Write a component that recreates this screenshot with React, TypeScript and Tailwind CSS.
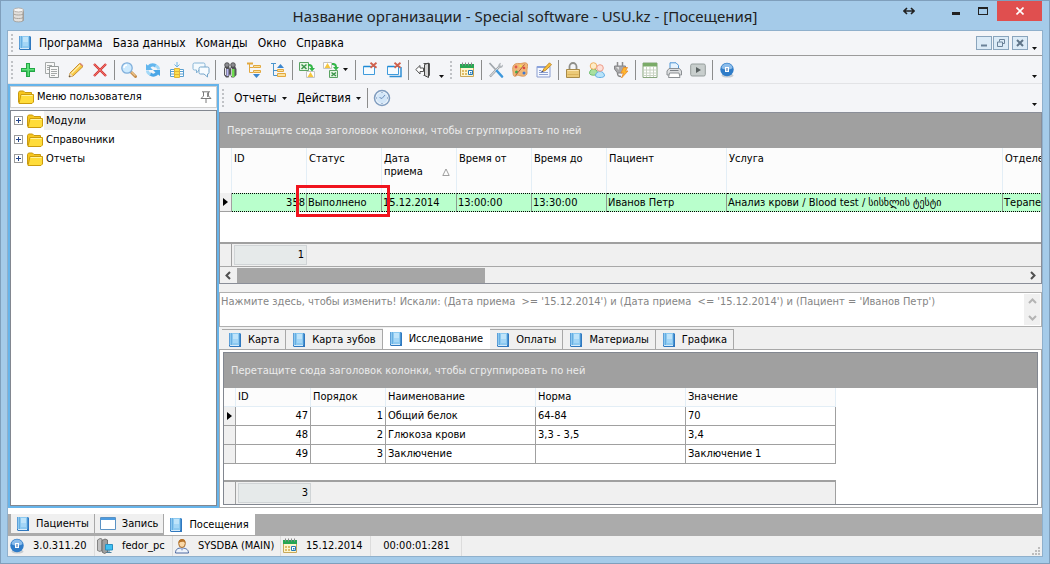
import React, { type ReactNode } from "react";
import clsx from "clsx";

type IconProps = { className?: string };

function Svg({ className = "size-4", children, box = "0 0 16 16" }: IconProps & { children: ReactNode; box?: string }) {
  return (
    <svg className={clsx("shrink-0", className)} viewBox={box} fill="none" aria-hidden="true">
      {children}
    </svg>
  );
}

/* ---------- icons ---------- */

const Book = () => (
  <Svg className="h-4 w-3.5" box="0 0 14 16">
    <path d="M1 1h11l1 1v13H2l-1-1z" fill="#2f78bf" />
    <path d="M1 1h1v12H1z" fill="#5d9fd8" />
    <path d="M2 1h9v12H2z" fill="#8cc9f0" />
    <path d="M3 1h1v12H3z" fill="#68afe2" />
    <path d="M5 2h5v5H5z" fill="#bfe4fa" />
    <path d="M5 7h5v4H5z" fill="#a4d6f6" />
    <path d="M11 1h1v12h-1z" fill="#4a94d2" />
    <path d="M2 13h9v1H2z" fill="#d6ebfa" />
  </Svg>
);

const Folder = () => (
  <Svg className="h-3.5 w-4" box="0 0 16 14">
    <path d="M.5 12.500V2.500l1-1.500h4l1.500 1.500h6.500v2" fill="#f7c61c" stroke="#c99a10" />
    <path d="M1 13.500 3 4.500h12.500v7.500l-1.500 1.500z" fill="#ffdc3a" stroke="#cc9c0c" />
    <path d="M3.500 5.500h11" stroke="#fff3a0" />
  </Svg>
);

const Plus = () => (
  <Svg>
    <path d="M6 1h4v5h5v4h-5v5H6v-5H1V6h5z" fill="#22a845" />
    <path d="M7 2h2v5h5v1.500H9V14H7.500V8.500H2V7h5z" fill="#5fe07a" />
  </Svg>
);

const Copy = () => (
  <Svg>
    <path d="M1.500.500h9v11h-9z" fill="#f7f7f7" stroke="#a5a9a9" />
    <path d="M3 3.500h5M3 5.500h3M3 7.500h3" stroke="#a5a9a9" />
    <path d="M5.500 4.500h9v11h-9z" fill="#f9f9f9" stroke="#959a9a" />
    <path d="M7 7.500h6M7 9.500h6M7 11.500h6M7 13.500h4" stroke="#a5a9a9" />
  </Svg>
);

const Pencil = () => (
  <Svg>
    <path d="m1 15 1-4L11.500 1.500 15 4.500 5 14z" fill="#f7c945" stroke="#bd7c1c" strokeWidth=".8" />
    <path d="M3.500 11.500 12 3" stroke="#ffeeb0" strokeWidth="1.300" />
    <path d="m11.500 1.500 1-.8 2.800 2.800-.8 1z" fill="#d98c80" />
    <path d="m1 15 1-4 3 3z" fill="#efdcc0" />
    <path d="m1 15 .4-1.800L2.800 14.500z" fill="#333" />
  </Svg>
);

const Cross = () => (
  <Svg>
    <path d="m2 2 12 12M14 2 2 14" stroke="#d23a38" strokeWidth="2.400" />
    <path d="m2 2 12 12M14 2 2 14" stroke="#f06a62" strokeWidth="1" />
  </Svg>
);

const Search = () => (
  <Svg>
    <path d="m10.500 10.500 4 4" stroke="#c48d4c" strokeWidth="3" strokeLinecap="round" />
    <path d="m10.500 10 3.800 3.800" stroke="#efc68c" strokeWidth="1.200" />
    <circle cx="6" cy="6" r="5.200" fill="#cdeafe" stroke="#7faedb" strokeWidth="1.300" />
    <path d="M3 6a3 3 0 0 1 3-3" stroke="#fff" strokeWidth="1.500" />
  </Svg>
);

const Refresh = () => (
  <Svg>
    <path d="M1 8V2l2 1.500C5 .8 10 .5 12.500 3.500L10 5.500C8.500 4 7 4 5.500 5.500L8 8z" fill="#62b6ee" />
    <path d="M15 8v6l-2-1.500C11 15.200 6 15.500 3.500 12.500L6 10.500c1.500 1.500 3 1.500 4.500 0L8 8z" fill="#4ba6e6" />
    <path d="M11 2.500c3 1 4 2.500 4 5h-3c0-1-.5-2-2-2.500zM5 13.500C2 12.500 1 11 1 8.500h3c0 1 .5 2 2 2.500z" fill="#a3d8f7" />
  </Svg>
);

const InsertColumn = () => (
  <Svg>
    <path d="M1.500 7.500h4v7h-4zM10.500 7.500h4v7h-4zM1 9.500h5M1 12h5M10 9.500h5M10 12h5" stroke="#5a9fd0" fill="#fff" />
    <path d="M5.500 6.500h5v9h-5z" fill="#ffe04a" stroke="#e0b43a" />
    <path d="M6 9.500h4M6 12.500h4" stroke="#e0b43a" />
    <path d="M8 0v5M5.500 2.500 8 5l2.500-2.500" stroke="#6db4e4" />
  </Svg>
);

const Chats = () => (
  <Svg className="h-4 w-[18px]" box="0 0 18 16">
    <path d="M2.500 1h9q1.500 0 1.500 1.500v4q0 1.500-1.500 1.500H7L4.500 11V8h-2Q1 8 1 6.500v-4Q1 1 2.500 1z" fill="#f4fafe" stroke="#86b4d6" />
    <path d="M8.500 5h7Q17 5 17 6.500v4q0 1.500-1.500 1.500v3L12 12H8.500Q7 12 7 10.500v-4Q7 5 8.500 5z" fill="#f8fcff" stroke="#75a5ca" />
  </Svg>
);

const Binoculars = () => (
  <Svg>
    <path d="M3 4h4l1 3 1-3h4l1.500 3v6L12 15.500H9.500L8 12l-1.500 3.500H4L2 13V7z" fill="#55555a" />
    <circle cx="5" cy="3" r="2.300" fill="#8b8b90" stroke="#444" strokeWidth=".8" />
    <circle cx="11" cy="3" r="2.300" fill="#8b8b90" stroke="#444" strokeWidth=".8" />
    <path d="M4.500 7h2v7h-2z" fill="#b9b6f2" />
    <path d="M10 7h2.500v8H10z" fill="#6fdc50" />
    <path d="M3 6h1v7H3zM9 6h.8v8H9z" fill="#e4e4e4" />
  </Svg>
);

const TreeIcon = ({ up }: { up?: boolean }) => (
  <Svg>
    {up ? (
      <>
        <path d="M3.500 1.500v12H7M1 1.500h5M3.500 8.500H7" stroke="#4a94cc" />
        <path d="m7 6 3.500-4L14 6z" fill="#3b86cf" />
        <path d="M7.500 7.500h6v2h-6z" fill="#fbe3a0" stroke="#e2a840" />
        <path d="M7.500 11.500h8v3h-8z" fill="#fbe3a0" stroke="#e2a840" />
      </>
    ) : (
      <>
        <path d="M3.500 2v8.500H7M3.500 5.500H7" stroke="#e2a840" />
        <path d="M1 1.500h6" stroke="#e2a840" strokeWidth="2" />
        <path d="M7.500 3.500h7v2h-7zM7.500 8.500h7v2h-7z" fill="#fbe3a0" stroke="#e2a840" />
        <path d="M7 12h7l-3.500 4z" fill="#3b86cf" />
      </>
    )}
  </Svg>
);

const ExcelExport = () => (
  <Svg>
    <path d="M.5.500h9v8h-9z" fill="#e6f5e4" stroke="#5aa262" />
    <path d="m2.500 2.500 5 4.500M7.500 2.500 2.500 7" stroke="#3b944a" strokeWidth="1.500" />
    <path d="M9 2c4-.5 5 2 5 4h2l-3 3.500L10 6h2c0-1.500-1-2.200-3-2z" fill="#35b64a" />
    <path d="M7.500 9.500h8v6h-8z" fill="#fff" stroke="#c4c4c4" />
    <path d="m8.500 15 3-5 3 5z" fill="#f5c640" />
  </Svg>
);

const ExcelImport = () => (
  <Svg>
    <path d="M.5.500h8v6h-8z" fill="#fff" stroke="#c4c4c4" />
    <path d="m1.500 6 3-5 3 5z" fill="#f5c640" />
    <path d="M9 1c4-.5 5 2 5 4h2l-3 3.500L10 5h2c0-1.500-1-2.200-3-2z" fill="#35b64a" />
    <path d="M6.500 8.500h8v7h-8z" fill="#e6f5e4" stroke="#5aa262" />
    <path d="m8.500 10.500 4.500 3.500M13 10.500l-4.500 3.500" stroke="#3b944a" strokeWidth="1.500" />
  </Svg>
);

const CloseWindow = ({ many }: { many?: boolean }) => (
  <Svg>
    {many && <path d="M3.500 14.500h11.500V5" stroke="#2f8fd4" strokeWidth="1.500" />}
    <path d="M1.500 4.500h11v8h-11z" fill="#f6fbff" stroke="#3f9bdc" />
    <path d="M1.500 4.500h7" stroke="#1f8ad4" strokeWidth="1.500" />
    <path d="m8.500.800 6 5M14.500.800l-6 5" stroke="#d0604c" strokeWidth="1.800" />
  </Svg>
);

const Exit = () => (
  <Svg>
    <path d="M8.500 1.500h6v12h-6" fill="#fff" stroke="#555" />
    <path d="m9.500 2.500 4-1.500v14.500l-4-2z" fill="#d8d8d8" stroke="#444" />
    <path d="M.8 7.500 5 3.500V6h3.500v3.500H5V12z" fill="#fff" stroke="#555" />
  </Svg>
);

const Calendar = () => (
  <Svg>
    <path d="M1.500 4.500h13v10h-13z" fill="#fdf5cf" stroke="#c8a85a" />
    <path d="M1 2h14v4H1z" fill="#27a552" />
    <path d="M3.500.500v3M6.500.500v3M9.500.500v3M12.500.500v3" stroke="#888" />
    <path d="M3 8h2v2H3zM6 8h2v2H6zM3 11h2v2H3zM6 11h2v2H6z" fill="#dfbd68" />
    <path d="M9.500 8.500h4v4h-4z" fill="#fff" stroke="#2378b8" />
    <path d="M11 10h1.500v1.500H11z" fill="#2378b8" />
  </Svg>
);

const Tools = () => (
  <Svg>
    <path d="M12 4 2 14.500" stroke="#9a9fa5" strokeWidth="2.400" />
    <path d="M12 4 2.500 14" stroke="#eceff1" />
    <path d="M15 2.500c.3 3-2 4.300-4.500 3.200C9.800 3 11 1 13 .8l-.8 2.400 1 .8z" fill="#b2b7bc" />
    <path d="m1.500 1 6 6.500" stroke="#a0a6ac" strokeWidth="1.800" />
    <path d="m9 9 5 5.500" stroke="#3d98dc" strokeWidth="2.600" strokeLinecap="round" />
  </Svg>
);

const Palette = () => (
  <Svg>
    <path d="M1 10C-.5 3 3 1 7 1.500c4 .3 6-2 8.500.5.500 4-1 5-.5 8s-2 5-6 4-3-1-5 0-3 0-3-4z" fill="#f0b778" stroke="#d68f52" strokeWidth=".8" />
    <circle cx="4" cy="5" r="1.400" fill="#e0584c" />
    <circle cx="8.500" cy="4" r="1.300" fill="#f7e04c" />
    <circle cx="4.500" cy="10" r="1.500" fill="#43a94c" />
    <circle cx="12" cy="11" r="1.500" fill="#3f78d0" />
    <circle cx="12" cy="6" r="1.300" fill="#e0483c" />
    <path d="m3.500 13.500 9-11" stroke="#b5563f" />
  </Svg>
);

const Note = () => (
  <Svg>
    <path d="M1 4.500h13v10.500H1z" fill="#f5f8ff" stroke="#8a9dd0" />
    <path d="M1 4h12v2H1z" fill="#8aa2dc" />
    <path d="M3 8.500h2M3 10.500h9M3 12.500h9" stroke="#8fa2d0" />
    <path d="M6.500 9.500 8 6.500 13.500.800 15.500 2.800 9.500 8.500z" fill="#f6bf3c" stroke="#b67a1c" strokeWidth=".8" />
    <path d="m5 10.500 1-2 1.500 1z" fill="#2a3a7a" />
  </Svg>
);

const Lock = () => (
  <Svg>
    <path d="M4.500 7V4.500a3.500 3.500 0 0 1 7 0V7" stroke="#8f8f8a" strokeWidth="1.800" />
    <path d="M1.500 7.500h13v8h-13z" fill="#ecca78" stroke="#a88a48" />
    <path d="M2.500 8.500h11" stroke="#fbe6b4" />
    <path d="M2.500 12.500h11" stroke="#dbb35c" />
  </Svg>
);

const Users = () => (
  <Svg>
    <path d="M.5 11.500c0-6 8-6 8 0-1 2.300-7 2.300-8 0z" fill="#a9e0a0" stroke="#6cbc6c" />
    <circle cx="4.500" cy="4" r="3.300" fill="#fdecc8" stroke="#f0b060" />
    <path d="M6.500 14c0-6 9-6 9 0-1 2-8 2-9 0z" fill="#b9e4fa" stroke="#64aee4" />
    <circle cx="11" cy="6" r="3.300" fill="#fde0d8" stroke="#ee9c8a" />
  </Svg>
);

const Plug = () => (
  <Svg>
    <path d="M4.500 0v4M9.500 0v4" stroke="#8d8d8d" strokeWidth="1.500" />
    <path d="M1.500 4h11v3l-3 4h-5l-3-4z" fill="#a8a8aa" stroke="#858588" />
    <path d="M3 5h3v3z" fill="#e0e0e0" />
    <path d="M4.500 11c0 3 1 3.500 3.500 3.500" stroke="#888" strokeWidth="1.500" />
    <path d="M10.500 5.500h4L12.500 9H15l-6.500 7 2-5H8z" fill="#ffb72d" stroke="#e88a2c" strokeWidth=".8" />
  </Svg>
);

const Sheet = () => (
  <Svg>
    <path d="M1 1h14v14.500H1z" fill="#fff" stroke="#86a57c" />
    <path d="M1 1h14v3.500H1z" fill="#7aab68" />
    <path d="M4.500 5v10M8 5v10M11.500 5v10M1.500 8h13M1.500 11h13M1.500 13.500h13" stroke="#c9d3c4" />
  </Svg>
);

const Printer = () => (
  <Svg>
    <path d="M4 8V.800h6l2.500 2.500V8" fill="#e6f3fe" stroke="#4f95d4" />
    <path d="M1 13V9l2-2.500h10.500L15.500 9v4z" fill="#dcdee0" stroke="#8c9094" />
    <path d="M3.500 11h9.500l1 4.500H2.500z" fill="#fff" stroke="#8c9094" />
    <path d="M4 8.500h8.500" stroke="#7c8186" />
  </Svg>
);

const Play = () => (
  <Svg>
    <rect x=".7" y="2" width="14.600" height="12" rx="1.500" fill="#c8cecd" stroke="#959d9c" />
    <path d="M6 5v6l5-3z" fill="#586060" />
  </Svg>
);

const Info = () => (
  <Svg>
    <ellipse cx="8.500" cy="13.500" rx="6" ry="2" fill="#c6ccd2" />
    <circle cx="8" cy="7.500" r="6.700" fill="#2f7cc8" />
    <path d="M2.500 6C3 0 13 0 13.500 6 11 8 5 8 2.500 6z" fill="#8cbdeb" />
    <path d="M6 5h4v5H6z" fill="#fff" />
    <path d="M7.500 6h1v3h-1z" fill="#2b64a8" />
  </Svg>
);

const Clock = () => (
  <Svg className="size-[18px]" box="0 0 18 18">
    <circle cx="9" cy="9" r="7.500" fill="#eef5fc" stroke="#7f9cbf" strokeWidth="1.500" />
    <circle cx="9" cy="9" r="5.800" fill="#d3e6f8" />
    <path d="M9 9.500 12 6M9 9.500 6.500 8.500" stroke="#6c8fbc" />
    <path d="M9 3v1M9 14v1M3 9h1M14 9h1" stroke="#6f8cb4" />
  </Svg>
);

const Pin = () => (
  <Svg className="h-3 w-3" box="0 0 12 12">
    <path d="M2 .800h8M3.500 1v4L1 7.500h10L8.500 5V1M6 7.500V12" fill="#fff" stroke="#7b7b7b" />
    <path d="M7 1.500h1.500v4.500H7z" fill="#8b8b8b" />
  </Svg>
);

const Database = () => (
  <Svg className="h-4 w-3.5" box="0 0 14 16">
    <path d="M1.500 3v10c0 2.500 10 2.500 10 0V3z" fill="#e3e0dc" stroke="#9c9893" strokeWidth=".8" />
    <ellipse cx="6.500" cy="3" rx="5" ry="2" fill="#f8f6f4" stroke="#a8a39e" strokeWidth=".8" />
    <path d="M1.500 6.500c0 2 10 2 10 0M1.500 10c0 2 10 2 10 0" stroke="#a9a49e" />
    <path d="M11 5v9" stroke="#9c9893" />
  </Svg>
);

const FormWindow = () => (
  <Svg className="h-3.5 w-4" box="0 0 16 14">
    <path d="M.5.500h15v12H.5z" fill="#fff" stroke="#5a92c4" />
    <path d="M1 1h14v2H1z" fill="#4c9be0" />
  </Svg>
);

const Computer = () => (
  <Svg className="h-4 w-[18px]" box="0 0 18 16">
    <path d="M1.500 2 4 .5 6 1v11l-2 1.500-2.500-1z" fill="#c3c3c3" stroke="#6d6d6d" strokeWidth=".8" />
    <path d="m6 2.500 3-1.500 2.500 1v12L8.500 15.500 6 14z" fill="#9e9e9e" stroke="#5d5d5d" strokeWidth=".8" />
    <path d="M9.500 6.500h7v5.500h-7z" fill="#40c0f2" stroke="#2b8fc0" />
    <path d="M13 12v2M10.500 14.500h5" stroke="#4b7f9c" />
  </Svg>
);

const User = () => (
  <Svg>
    <path d="M1.500 15c0-4 2.500-5 6-5s7 1 7 5z" fill="#eef3fb" stroke="#4c69a0" />
    <path d="m6 10 2 3 2-3z" fill="#9fb4dc" />
    <ellipse cx="8" cy="5.500" rx="3.300" ry="4" fill="#fbd9a8" stroke="#a86c2c" />
    <path d="M4.500 5C4 0 12-.5 11.500 5 10 3 7 3.500 4.500 5z" fill="#b8742a" />
  </Svg>
);

const Caret = () => (
  <Svg className="h-[3px] w-[5px]" box="0 0 5 3">
    <path d="M0 0h5L2.500 3z" fill="#111" />
  </Svg>
);

const Marker = () => (
  <Svg className="mx-auto h-2 w-[5px]" box="0 0 5 8">
    <path d="M0 0v8l5-4z" fill="#000" />
  </Svg>
);

const Chevron = ({ dir, tone }: { dir: "left" | "right" | "up" | "down"; tone: string }) => {
  const d = { left: "M6 1 2.500 4.500 6 8", right: "M3 1l3.500 3.500L3 8", up: "M1 6l3.500-3.500L8 6", down: "M1 3l3.500 3.500L8 3" }[dir];
  return (
    <Svg className="size-[9px]" box="0 0 9 9">
      <path d={d} stroke={tone} strokeWidth="2" />
    </Svg>
  );
};

/* ---------- small building blocks ---------- */

const Grip = () => <span className="mx-[3px] h-[18px] w-0.5 shrink-0 bg-[repeating-linear-gradient(to_bottom,#c0c2c6_0_2px,transparent_2px_4px)]" />;

const Separator = () => <span className="mx-0.5 h-5 w-px shrink-0 bg-[#8c8c8c]" />;

function Tool({ label, children }: { label: string; children: ReactNode }) {
  return (
    <button type="button" aria-label={label} className="flex h-6 w-6 shrink-0 items-center justify-center">
      {children}
    </button>
  );
}

const Overflow = ({ className }: IconProps) => (
  <button type="button" aria-label="Ещё" className={clsx("flex h-4 w-3 shrink-0 items-end justify-center pb-1", className)}>
    <Caret />
  </button>
);

const toolGroups: [string, ReactNode][][] = [
  [["Добавить", <Plus />], ["Копировать", <Copy />], ["Изменить", <Pencil />], ["Удалить", <Cross />]],
  [["Поиск", <Search />], ["Обновить", <Refresh />], ["Столбцы", <InsertColumn />], ["Сообщения", <Chats />]],
  [["Найти", <Binoculars />], ["Развернуть", <TreeIcon />], ["Свернуть", <TreeIcon up />]],
];

const serviceGroups: [string, ReactNode][][] = [
  [["Календарь", <Calendar />]],
  [["Настройки", <Tools />], ["Оформление", <Palette />], ["Заметка", <Note />]],
  [["Блокировка", <Lock />], ["Пользователи", <Users />], ["Подключение", <Plug />]],
  [["Таблица", <Sheet />], ["Печать", <Printer />], ["Запуск", <Play />]],
  [["О программе", <Info />]],
];

function Groups({ groups, trailing }: { groups: [string, ReactNode][][]; trailing?: boolean }) {
  return groups.map((group, i) => (
    <React.Fragment key={i}>
      {group.map(([label, icon]) => (
        <Tool key={label} label={label}>
          {icon}
        </Tool>
      ))}
      {(trailing || i < groups.length - 1) && <Separator />}
    </React.Fragment>
  ));
}

function GroupPanel() {
  return (
    <div className="flex h-[35px] shrink-0 items-center bg-[#a0a0a0] px-[7px] text-[#ececec]">
      Перетащите сюда заголовок колонки, чтобы сгруппировать по ней
    </div>
  );
}

function Footer({ count, className }: { count: number; className?: string }) {
  return (
    <div className={clsx("flex h-6 shrink-0 border-t-2 border-[#a0a0a0] bg-[#f0f0f0]", className)}>
      <span className="w-3 border-r border-[#a0a0a0]" />
      <span className="my-px ml-0.5 flex w-[73px] items-center justify-end border border-[#d0d4d6] bg-[#e6eaea] pr-0.5">{count}</span>
    </div>
  );
}

/* ---------- window parts ---------- */

function TitleBar() {
  return (
    <header className="relative flex h-[30px] shrink-0 items-center justify-center">
      <span className="absolute left-1 top-1.5">
        <Database />
      </span>
      <h1 className="[font-family:'Noto_Sans',sans-serif] text-[15px] text-[#222]">
        Название организации - Special software - USU.kz - [Посещения]
      </h1>
      <div className="absolute right-0 top-0 flex h-5 items-stretch">
        <button type="button" aria-label="Перенести" className="mr-6 flex w-5 items-center justify-center">
          <Svg className="h-2 w-3" box="0 0 12 8">
            <path d="M2 4h8M4 1 1 4l3 3M8 1l3 3-3 3" stroke="#222" strokeWidth="1.600" />
          </Svg>
        </button>
        <button type="button" aria-label="Свернуть окно" className="flex w-[26px] items-center justify-center pt-1">
          <span className="h-[3px] w-2 bg-[#222]" />
        </button>
        <button type="button" aria-label="Развернуть окно" className="flex w-7 items-center justify-center">
          <span className="h-2 w-2.5 border border-t-2 border-[#222]" />
        </button>
        <button type="button" aria-label="Закрыть окно" className="flex w-[45px] items-center justify-center bg-[#e04f4f]">
          <Svg className="size-2" box="0 0 8 8">
            <path d="m.5.500 7 7M7.500.500l-7 7" stroke="#fff" strokeWidth="1.600" />
          </Svg>
        </button>
      </div>
    </header>
  );
}

function MenuBar() {
  const box = "flex h-3.5 w-4 items-center justify-center border border-[#8aa5bd] bg-[#dcebf7]";
  return (
    <nav className="flex h-[25px] shrink-0 items-center border-b border-[#9b9b9b] text-xs">
      <Grip />
      <span className="mx-0.5">
        <Book />
      </span>
      {["Программа", "База данных", "Команды", "Окно", "Справка"].map((m) => (
        <button type="button" key={m} className="px-[5px]">
          {m}
        </button>
      ))}
      <div className="ml-auto flex items-center">
        <button type="button" aria-label="Свернуть" className={clsx(box, "mr-px")}>
          <Svg className="size-2" box="0 0 8 8"><path d="M1 6.500h6" stroke="#6b8299" strokeWidth="2" /></Svg>
        </button>
        <button type="button" aria-label="Восстановить" className={box}>
          <Svg className="size-2" box="0 0 8 8"><path d="M2.500 2.500v-2h5v4h-2M.5 3h5v4.500h-5z" stroke="#6b8299" /></Svg>
        </button>
        <button type="button" aria-label="Закрыть" className={clsx(box, "ml-[3px]")}>
          <Svg className="size-2" box="0 0 8 8"><path d="m1 1 6 6M7 1 1 7" stroke="#5f7488" strokeWidth="2" /></Svg>
        </button>
        <Overflow className="mr-0.5 mt-1.5" />
      </div>
    </nav>
  );
}

function ToolBar() {
  return (
    <div className="flex h-7 shrink-0 items-center border-b border-[#e2e3e6]" role="toolbar">
      <Grip />
      <Groups groups={toolGroups} trailing />
      <Tool label="Экспорт"><ExcelExport /></Tool>
      <Tool label="Импорт"><ExcelImport /></Tool>
      <button type="button" aria-label="Параметры импорта" className="flex h-6 w-2.5 items-center">
        <Caret />
      </button>
      <Separator />
      <Tool label="Закрыть вкладку"><CloseWindow /></Tool>
      <Tool label="Закрыть все"><CloseWindow many /></Tool>
      <Separator />
      <Tool label="Выход"><Exit /></Tool>
      <Overflow className="mt-2" />
      <Grip />
      <Groups groups={serviceGroups} />
      <Overflow className="ml-auto mr-0.5 mt-2" />
    </div>
  );
}

function Sidebar() {
  return (
    <aside className="flex w-[211px] shrink-0 flex-col gap-0.5 border-2 border-[#67b4ea] bg-[#f4f5f8]">
      <div className="flex h-[22px] items-center border border-[#d0d0d0] bg-white pl-[7px] pr-1">
        <Folder />
        <h2 className="ml-[3px] flex-1">Меню пользователя</h2>
        <button type="button" aria-label="Закрепить">
          <Pin />
        </button>
      </div>
      <ul className="flex-1 border border-[#828790] bg-white">
        {["Модули", "Справочники", "Отчеты"].map((name, i) => (
          <li key={name} className="flex h-[19px] items-center pl-[3px]">
            <button type="button" aria-label={`Развернуть: ${name}`} className="mr-1 flex size-[9px] items-center justify-center border border-[#9a9a9a] bg-white">
              <Svg className="size-[7px]" box="0 0 7 7">
                <path d="M1 3.500h5M3.500 1v5" stroke="#24468c" />
              </Svg>
            </button>
            <Folder />
            <button type="button" className={clsx("ml-px h-full flex-1 pl-0.5 text-left", i === 0 && "bg-[#f0f0f0]")}>
              {name}
            </button>
          </li>
        ))}
      </ul>
    </aside>
  );
}

function VisitsGrid() {
  const head = "h-[45px] border-r border-[#e3eef6] px-0.5 pt-1 text-left align-top font-normal leading-[13px]";
  const cell = "h-[19px] border-r border-y border-y-black border-r-[#8c9c90] border-dotted [border-right-style:solid] bg-[#b9ffcc] px-px";
  return (
    <section className="flex shrink-0 flex-col overflow-hidden border border-[#8a8e98] bg-white">
      <GroupPanel />
      <div className="overflow-hidden pb-[30px]">
        <table className="w-[858px] table-fixed border-separate border-spacing-0 whitespace-nowrap">
          <colgroup>
            <col className="w-3" />
            <col className="w-[75px]" />
            <col className="w-[75px]" />
            <col className="w-[75px]" />
            <col className="w-[75px]" />
            <col className="w-[75px]" />
            <col className="w-[120px]" />
            <col className="w-[276px]" />
            <col className="w-[75px]" />
          </colgroup>
          <thead className="bg-[#fcfcfc]">
            <tr>
              <th className={head} aria-label="Строка" />
              <th className={head}>ID</th>
              <th className={head}>Статус</th>
              <th className={head}>
                <div className="flex items-end justify-between whitespace-normal">
                  <span className="w-12">Дата приема</span>
                  <Svg className="mb-0.5 mr-1 size-2" box="0 0 8 8">
                    <path d="M4 1 .8 7.500h6.400z" stroke="#888" strokeWidth=".8" />
                  </Svg>
                </div>
              </th>
              <th className={head}>Время от</th>
              <th className={head}>Время до</th>
              <th className={head}>Пациент</th>
              <th className={head}>Услуга</th>
              <th className={head}>Отделение</th>
            </tr>
          </thead>
          <tbody>
            <tr>
              <td className="border-b border-r border-[#a0a0a0] bg-[#f0f0f0]"><Marker /></td>
              <td className={clsx(cell, "text-right")}>358</td>
              <td className={clsx(cell, "relative")}>
                Выполнено
                <span className="pointer-events-none absolute -left-[11px] -top-[9px] z-10 h-8 w-[94px] border-[3px] border-[#f0141e]" />
              </td>
              <td className={cell}>15.12.2014</td>
              <td className={cell}>13:00:00</td>
              <td className={cell}>13:30:00</td>
              <td className={cell}>Иванов Петр</td>
              <td className={cell}>Анализ крови / Blood test / სისხლის ტესტი</td>
              <td className={cell}>Терапевтия</td>
            </tr>
          </tbody>
        </table>
      </div>
      <Footer count={1} />
      <div className="flex h-[17px] items-center border-t border-[#a8a8a8] bg-[#f0f0f0]">
        <button type="button" aria-label="Влево" className="flex w-[17px] justify-center">
          <Chevron dir="left" tone="#505050" />
        </button>
        <span className="flex h-[15px] flex-1">
          <span className="w-[31.500%] bg-[#a6a6a6]" />
        </span>
        <button type="button" aria-label="Вправо" className="flex w-[17px] justify-center">
          <Chevron dir="right" tone="#505050" />
        </button>
      </div>
    </section>
  );
}

const results = [
  [47, 1, "Общий белок", "64-84", "70"],
  [48, 2, "Глюкоза крови", "3,3 - 3,5", "3,4"],
  [49, 3, "Заключение", "", "Заключение 1"],
];

function ResultsGrid() {
  const line = "h-[19px] border-b border-r border-[#a0a0a0] px-0.5";
  const head = "h-[19px] border-b border-r border-[#e3eef6] px-0.5 text-left font-normal";
  return (
    <div className="flex min-h-0 flex-1 flex-col border border-[#828790] bg-white">
      <GroupPanel />
      <table className="w-[612px] table-fixed border-separate border-spacing-0">
        <colgroup>
          <col className="w-3" />
          <col className="w-[75px]" />
          <col className="w-[75px]" />
          <col className="w-[150px]" />
          <col className="w-[150px]" />
          <col className="w-[150px]" />
        </colgroup>
        <thead className="bg-[#fcfcfc]">
          <tr>
            <th className={head} aria-label="Строка" />
            {["ID", "Порядок", "Наименование", "Норма", "Значение"].map((h) => (
              <th key={h} className={head}>{h}</th>
            ))}
          </tr>
        </thead>
        <tbody>
          {results.map((row, i) => (
            <tr key={i}>
              <td className="border-b border-r border-[#a0a0a0] bg-[#f0f0f0]">{i === 0 && <Marker />}</td>
              {row.map((v, j) => (
                <td key={j} className={clsx(line, j < 2 && "text-right")}>{v}</td>
              ))}
            </tr>
          ))}
        </tbody>
      </table>
      <div className="flex-1" />
      <Footer count={3} className="w-[612px] border-r border-r-[#a0a0a0]" />
    </div>
  );
}

function Tab({ icon, active, roomy, children }: { icon: ReactNode; active?: boolean; roomy?: boolean; children: ReactNode }) {
  return (
    <button
      type="button"
      role="tab"
      aria-selected={!!active}
      className={clsx(
        "flex items-center gap-1.5 whitespace-nowrap border-r",
        roomy ? "px-1.5" : "px-[5px]",
        active ? "h-[21px] border-white bg-white" : "h-[19px] border-[#a8a8a8] bg-[#f0f0f0]",
      )}
    >
      {icon}
      {children}
    </button>
  );
}

function Workspace() {
  return (
    <main className="flex min-w-0 flex-1 flex-col bg-[#f0f0f0]">
      <div className="flex h-7 shrink-0 items-center bg-[#f4f5f8] text-xs" role="toolbar">
        <Grip />
        <button type="button" className="ml-1 flex items-center gap-[5px] px-[3px]">Отчеты <Caret /></button>
        <button type="button" className="ml-1 flex items-center gap-[5px] px-[3px]">Действия <Caret /></button>
        <span className="ml-px flex"><Separator /></span>
        <Tool label="Время"><Clock /></Tool>
        <Overflow className="ml-auto mr-0.5 mt-2" />
      </div>
      <VisitsGrid />
      <div className="mt-2 flex h-[35px] shrink-0 border border-[#b0b0b0] bg-white">
        <textarea
          readOnly
          aria-label="Условие поиска"
          className="h-full flex-1 resize-none overflow-hidden p-px text-[#858585] outline-none"
          value="Нажмите здесь, чтобы изменить! Искали: (Дата приема  >= '15.12.2014') и (Дата приема  <= '15.12.2014') и (Пациент = 'Иванов Петр')"
        />
        <div className="m-px flex w-4 flex-col items-center justify-around bg-[#f0f0f0]">
          <button type="button" aria-label="Вверх"><Chevron dir="up" tone="#b4b4b4" /></button>
          <button type="button" aria-label="Вниз"><Chevron dir="down" tone="#b4b4b4" /></button>
        </div>
      </div>
      <div className="mt-px flex h-[21px] shrink-0 items-end pl-[3px]" role="tablist">
        {["Карта", "Карта зубов", "Исследование", "Оплаты", "Материалы", "Графика"].map((t) => {
          const active = t === "Исследование";
          return (
            <div key={t} className={clsx(!active && "border-t border-[#a8a8a8]")}>
              <Tab icon={<Book />} active={active} roomy>{t}</Tab>
            </div>
          );
        })}
      </div>
      <div className="flex min-h-0 flex-1 flex-col border border-[#a8a8a8] bg-white px-[3px] py-0.5">
        <ResultsGrid />
      </div>
    </main>
  );
}

function StatusBar() {
  const cells: [ReactNode, string, string][] = [
    [<Info />, "3.0.311.20", "w-[87px]"],
    [<Computer />, "fedor_pc", "w-[78px]"],
    [<User />, "SYSDBA (MAIN)", "w-[108px]"],
    [<Calendar />, "15.12.2014", "w-[90px]"],
    [null, "00:00:01:281", "w-[91px]"],
  ];
  return (
    <footer className="flex h-5 shrink-0 items-center bg-[#f0f0f0]">
      {cells.map(([icon, text, width]) => (
        <span key={text} className={clsx("flex h-full items-center gap-2 whitespace-nowrap border-r border-[#dcdcdc] pl-px", width, !icon && "justify-center")}>
          {icon}
          {text}
        </span>
      ))}
      <Svg className="mb-px ml-auto mr-0.5 size-2 self-end" box="0 0 8 8">
        <path d="M6 0h2v2H6zM3 3h2v2H3zM6 3h2v2H6zM0 6h2v2H0zM3 6h2v2H3zM6 6h2v2H6z" fill="#bdbdbd" />
      </Svg>
    </footer>
  );
}

export default function App() {
  return (
    <div className="flex h-screen min-h-[540px] flex-col overflow-hidden border border-[#7f9fbc] bg-[#a5cbe9] px-[7px] pb-[7px] [font-family:'DejaVu_Sans_Condensed','Noto_Sans',sans-serif] text-[11px] leading-4 text-black">
      <TitleBar />
      <div className="flex min-h-0 flex-1 flex-col bg-[#f4f5f8] outline outline-[#8fb0cc]">
        <MenuBar />
        <ToolBar />
        <div className="flex min-h-0 flex-1">
          <Sidebar />
          <Workspace />
        </div>
        <div className="flex h-7 shrink-0 items-start border-t-[6px] border-white bg-[#ababab] pl-[3px]" role="tablist">
          <Tab icon={<Book />}>Пациенты</Tab>
          <Tab icon={<FormWindow />}>Запись</Tab>
          <Tab icon={<Book />} active>Посещения</Tab>
        </div>
        <StatusBar />
      </div>
    </div>
  );
}
